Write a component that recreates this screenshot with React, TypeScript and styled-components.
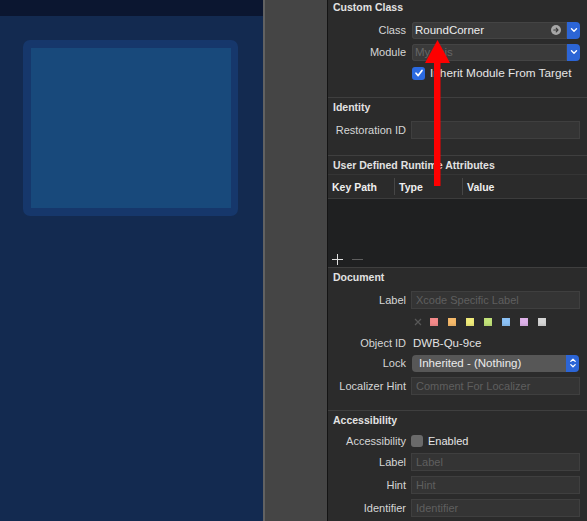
import React from 'react';
import styled, {createGlobalStyle} from 'styled-components';

const GlobalStyle = createGlobalStyle`
  html, body {
    margin: 0;
    padding: 0;
    background: #2b2b2b;
    overflow: hidden;
  }
  body {
    font-family: "Liberation Sans", Arial, sans-serif;
    font-size: 11px;
    color: #dcdcdc;
  }
`

const Page = styled.div`
  position: relative;
  display: flex;
  width: 587px;
  height: 521px;
  overflow: hidden;
`

const Canvas = styled.div`
  display: flex;
  flex-direction: column;
  width: 263px;
  flex: none;
`

const CanvasTopBar = styled.div`
  height: 16px;
  background: #0b1630;
`

const CanvasArea = styled.div`
  flex: 1;
  background: #132a50;
  padding: 24px 0 0 23px;
`

const ViewFrame = styled.div`
  width: 215px;
  height: 176px;
  box-sizing: border-box;
  padding: 8px 7px 8px 8px;
  border-radius: 7px;
  background: #16376b;
`

const ViewFill = styled.div`
  width: 100%;
  height: 100%;
  background: #18497b;
`

const Gutter = styled.div`
  width: 62px;
  flex: none;
  background: #454545;
  border-left: 2px solid #626262;
  border-right: 1px solid #141414;
`

const Inspector = styled.div`
  flex: 1;
  display: flex;
  flex-direction: column;
  margin-top: -2px;
  background: #2b2b2b;
`

const Section = styled.div<{$pb?: number}>`
  display: flex;
  flex-direction: column;
  padding-top: 1px;
  padding-bottom: ${p => p.$pb ?? 0}px;

  & + & {
    border-top: 1px solid #3f3f3f;
  }
`

const SectionTitle = styled.div`
  height: 16px;
  line-height: 16px;
  padding-left: 5px;
  font-size: 10.5px;
  font-weight: 700;
  color: #e2e2e2;
`

const Row = styled.div<{$mt: number; $h?: number}>`
  display: flex;
  align-items: center;
  height: ${p => p.$h ?? 18}px;
  margin-top: ${p => p.$mt}px;
  padding-right: 7px;
`

const Label = styled.div`
  width: 78px;
  flex: none;
  margin-right: 5px;
  text-align: right;
  white-space: nowrap;
  color: #d6d6d6;
`

const TextField = styled.div<{$muted?: boolean}>`
  flex: 1;
  height: 18px;
  box-sizing: border-box;
  padding-left: 4px;
  line-height: 16px;
  background: #343434;
  border: 1px solid #3f3f3f;
  color: ${p => p.$muted ? '#5f5f5f' : '#e6e6e6'};
  white-space: nowrap;
  overflow: hidden;
`

const Combo = styled.div`
  flex: 1;
  display: flex;
  height: 17px;
  margin-left: 1px;
`

const ComboInput = styled.div<{$muted?: boolean}>`
  flex: 1;
  display: flex;
  align-items: center;
  justify-content: space-between;
  padding: 0 6px 0 3px;
  background: #3a3a3a;
  border-radius: 3px 0 0 3px;
  box-shadow: inset 0 0 0 1px #444;
  font-size: 11.5px;
  color: ${p => p.$muted ? '#666' : '#eeeeee'};
`

const BlueButton = styled.div`
  width: 13px;
  flex: none;
  display: flex;
  align-items: center;
  justify-content: center;
  background: #2c65d6;
  border-radius: 0 4px 4px 0;
`

const GoCircle = styled.div`
  width: 10px;
  height: 10px;
  border-radius: 50%;
  background: #a6a6a6;
  display: flex;
  align-items: center;
  justify-content: center;
`

const CheckBox = styled.div<{$on?: boolean}>`
  width: ${p => p.$on ? 13 : 12}px;
  height: ${p => p.$on ? 13 : 12}px;
  flex: none;
  margin-right: 5px;
  margin-left: ${p => p.$on ? 1 : 0}px;
  border-radius: 3px;
  background: ${p => p.$on ? '#2b6ae0' : '#6a6a6a'};
  display: flex;
  align-items: center;
  justify-content: center;
`

const PlainText = styled.span<{$size?: number}>`
  font-size: ${p => p.$size ?? 11}px;
  color: #e6e6e6;
  white-space: nowrap;
`

const Value = styled.span`
  padding-left: 2px;
  font-size: 11.5px;
  color: #e2e2e2;
`

const Swatches = styled.div`
  display: flex;
  align-items: center;
  gap: 10px;
  padding-left: 3px;
`

const XMark = styled.svg`
  width: 8px;
  height: 8px;
  margin-right: -2px;
`

const Swatch = styled.div<{$color: string}>`
  width: 8px;
  height: 8px;
  background: ${p => p.$color};
  box-shadow: inset 0 -2px 2px rgba(0, 0, 0, 0.08);
`

const Popup = styled.div`
  flex: 1;
  display: flex;
  height: 17px;
  margin-left: 1px;
  margin-right: 1px;
`

const PopupBody = styled.div`
  flex: 1;
  padding-left: 7px;
  line-height: 17px;
  font-size: 11.5px;
  background: #575757;
  border-radius: 4px 0 0 4px;
  color: #ebebeb;
`

const Table = styled.div`
  display: flex;
  flex-direction: column;
  margin-top: 1px;
`

const TableHead = styled.div`
  display: grid;
  grid-template-columns: 66px 68px 1fr;
  height: 23px;
  border-top: 1px solid #353535;
  border-bottom: 1px solid #3c3c3c;
`

const HeadCell = styled.div<{$divided?: boolean}>`
  display: flex;
  align-items: center;
  padding-left: 4px;
  font-size: 10.5px;
  font-weight: 700;
  color: #efefef;
  border-left: ${p => p.$divided ? '1px solid #464646' : 'none'};
  margin: 3px 0;
`

const TableBody = styled.div`
  height: 68px;
  display: flex;
  align-items: flex-end;
  gap: 9px;
  padding: 0 0 2px 4px;
  box-sizing: border-box;
  background: #1f2021;
`

const Chevron = () => (
  <svg width="8" height="6" viewBox="0 0 8 6">
    <polyline points="1.5,1.8 4,4.2 6.5,1.8" fill="none" stroke="#fff" strokeWidth="1.4" strokeLinecap="round" strokeLinejoin="round"/>
  </svg>
)

const UpDown = () => (
  <svg width="8" height="12" viewBox="0 0 8 12">
    <polyline points="1.8,4.4 4,2.2 6.2,4.4" fill="none" stroke="#fff" strokeWidth="1.3" strokeLinecap="round" strokeLinejoin="round"/>
    <polyline points="1.8,7.6 4,9.8 6.2,7.6" fill="none" stroke="#fff" strokeWidth="1.3" strokeLinecap="round" strokeLinejoin="round"/>
  </svg>
)

const Tick = () => (
  <svg width="10" height="10" viewBox="0 0 10 10">
    <polyline points="2,5.2 4.2,7.6 8,2.4" fill="none" stroke="#fff" strokeWidth="1.7" strokeLinecap="round" strokeLinejoin="round"/>
  </svg>
)

const Annotation = styled.svg`
  position: absolute;
  left: 0;
  top: 0;
  pointer-events: none;
`

const swatchColors = ['#f48a8a', '#f6ba6b', '#f1ec7b', '#c2e379', '#8cc2f6', '#dfb3ea', '#d6d6d6']

export default function App() {
  return (
    <>
      <GlobalStyle />
      <Page>
        <Canvas>
          <CanvasTopBar />
          <CanvasArea>
            <ViewFrame><ViewFill /></ViewFrame>
          </CanvasArea>
        </Canvas>
        <Gutter />
        <Inspector>
          <Section $pb={16}>
            <SectionTitle>Custom Class</SectionTitle>
            <Row $mt={6}>
              <Label>Class</Label>
              <Combo>
                <ComboInput>
                  RoundCorner
                  <GoCircle>
                    <svg width="6" height="6" viewBox="0 0 6 6">
                      <path d="M0.8 3h4M3.2 1.2L5 3L3.2 4.8" fill="none" stroke="#3a3a3a" strokeWidth="1.1" strokeLinecap="round" strokeLinejoin="round"/>
                    </svg>
                  </GoCircle>
                </ComboInput>
                <BlueButton><Chevron /></BlueButton>
              </Combo>
            </Row>
            <Row $mt={4}>
              <Label>Module</Label>
              <Combo>
                <ComboInput $muted>MyApis</ComboInput>
                <BlueButton><Chevron /></BlueButton>
              </Combo>
            </Row>
            <Row $mt={4} $h={16}>
              <Label />
              <CheckBox $on><Tick /></CheckBox>
              <PlainText $size={11.8}>Inherit Module From Target</PlainText>
            </Row>
          </Section>

          <Section $pb={16}>
            <SectionTitle>Identity</SectionTitle>
            <Row $mt={6}>
              <Label>Restoration ID</Label>
              <TextField />
            </Row>
          </Section>

          <Section>
            <SectionTitle>User Defined Runtime Attributes</SectionTitle>
            <Table>
              <TableHead>
                <HeadCell>Key Path</HeadCell>
                <HeadCell $divided>Type</HeadCell>
                <HeadCell $divided>Value</HeadCell>
              </TableHead>
              <TableBody>
                <svg width="11" height="11" viewBox="0 0 11 11">
                  <path d="M5.5 0v11M0 5.5h11" stroke="#e0e0e0" strokeWidth="1"/>
                </svg>
                <svg width="11" height="11" viewBox="0 0 11 11">
                  <path d="M0 5.5h11" stroke="#5e5e5e" strokeWidth="1"/>
                </svg>
              </TableBody>
            </Table>
          </Section>

          <Section $pb={15}>
            <SectionTitle>Document</SectionTitle>
            <Row $mt={6}>
              <Label>Label</Label>
              <TextField $muted>Xcode Specific Label</TextField>
            </Row>
            <Row $mt={4}>
              <Label />
              <Swatches>
                <XMark viewBox="0 0 8 8">
                  <path d="M1 1l6 6M7 1l-6 6" stroke="#585858" strokeWidth="1.2"/>
                </XMark>
                {swatchColors.map(c => <Swatch key={c} $color={c} />)}
              </Swatches>
            </Row>
            <Row $mt={3}>
              <Label>Object ID</Label>
              <Value>DWB-Qu-9ce</Value>
            </Row>
            <Row $mt={2}>
              <Label>Lock</Label>
              <Popup>
                <PopupBody>Inherited - (Nothing)</PopupBody>
                <BlueButton><UpDown /></BlueButton>
              </Popup>
            </Row>
            <Row $mt={5}>
              <Label>Localizer Hint</Label>
              <TextField $muted>Comment For Localizer</TextField>
            </Row>
          </Section>

          <Section>
            <SectionTitle>Accessibility</SectionTitle>
            <Row $mt={5} $h={16}>
              <Label>Accessibility</Label>
              <CheckBox />
              <PlainText>Enabled</PlainText>
            </Row>
            <Row $mt={4}>
              <Label>Label</Label>
              <TextField $muted>Label</TextField>
            </Row>
            <Row $mt={5}>
              <Label>Hint</Label>
              <TextField $muted>Hint</TextField>
            </Row>
            <Row $mt={5}>
              <Label>Identifier</Label>
              <TextField $muted>Identifier</TextField>
            </Row>
          </Section>
        </Inspector>

        <Annotation width="587" height="521" viewBox="0 0 587 521">
          <polygon points="437.5,40 425,63 450,63" fill="#fe0000"/>
          <rect x="434" y="62" width="6.5" height="124" fill="#fe0000"/>
        </Annotation>
      </Page>
    </>
  );
}
